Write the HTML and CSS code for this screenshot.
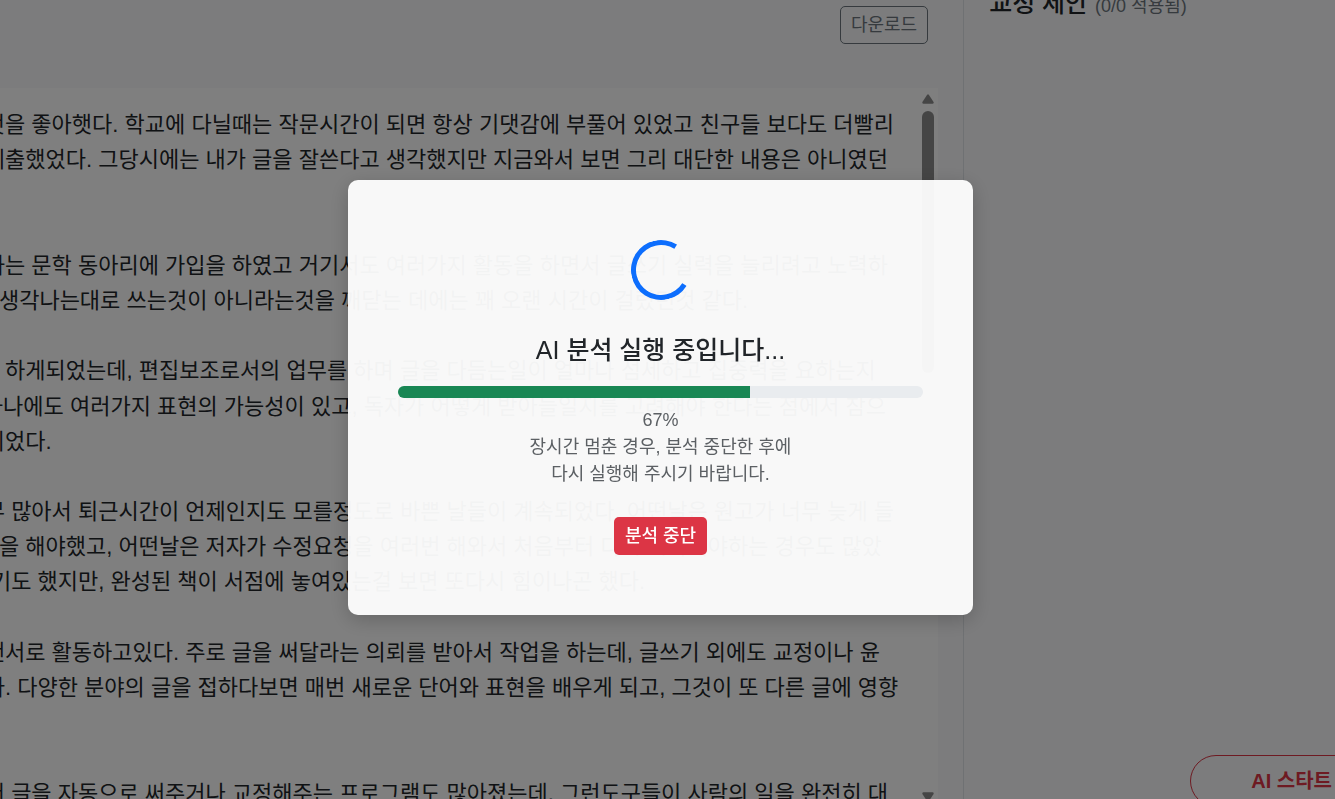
FILE: index.html
```
<!DOCTYPE html>
<html lang="ko">

<head>
    <meta charset="UTF-8">
    <title>AI 교정</title>
    <link rel="stylesheet" href="styles.css">
</head>

<body>
    <div class="app">
        <main class="editor-panel">
            <div class="toolbar">
                <button class="btn btn-outline" type="button">다운로드</button>
            </div>

            <div class="editor">
                <textarea class="editor-text" aria-label="원고" wrap="off" spellcheck="false">
나는 늘 글 쓰던것을 좋아햇다. 학교에 다닐때는 작문시간이 되면 항상 기댓감에 부풀어 있었고 친구들 보다도 더빨리
글을 다 써서 꼭제출했었다. 그당시에는 내가 글을 잘쓴다고 생각했지만 지금와서 보면 그리 대단한 내용은 아니였던


시를 쓰고 또 말하는 문학 동아리에 가입을 하였고 거기서도 여러가지 활동을 하면서 글쓰기 실력을 늘리려고 노력하
글은 그저 막연히생각나는대로 쓰는것이 아니라는것을 깨닫는 데에는 꽤 오랜 시간이 걸렸던것 같다.

편집 보조로 일을 하게되었는데, 편집보조로서의 업무를 하며 글을 다듬는일이 얼마나 섬세하고 집중력을 요하는지
한글, 두 줄, 그 하나에도 여러가지 표현의 가능성이 있고, 독자가 어떻게 받아들일지를 고려해야 한다는 점에서 참으
늘 깊이 알게 또되었다.

매일 할 일이 너무 많아서 퇴근시간이 언제인지도 모를정도로 바쁜 날들이 계속되었다. 어떤날은 원고가 너무 늦게 들
야근과 마감 작업을 해야했고, 어떤날은 저자가 수정요청을 여러번 해와서 처음부터 다시 시작해야하는 경우도 많았
꽤나, 또 참 힘들기도 했지만, 완성된 책이 서점에 놓여있는걸 보면 또다시 힘이나곤 했다.

난 글 쓰는 프리랜서로 활동하고있다. 주로 글을 써달라는 의뢰를 받아서 작업을 하는데, 글쓰기 외에도 교정이나 윤
일은 늘 꽤 즐겁다. 다양한 분야의 글을 접하다보면 매번 새로운 단어와 표현을 배우게 되고, 그것이 또 다른 글에 영향


요즘 와 글을 써서 글을 자동으로 써주거나 교정해주는 프로그램도 많아졌는데, 그런도구들이 사람의 일을 완전히 대</textarea>
                <div class="scrollbar">
                    <svg class="arrow" viewBox="0 0 12 10"><path d="M5 1 Q6 -0.4 7 1 L11.6 8 Q12 9.8 10.5 9.8 H1.5 Q0 9.8 0.4 8 Z" /></svg>
                    <div class="thumb"></div>
                    <svg class="arrow arrow-down" viewBox="0 0 12 10"><path d="M5 9 Q6 10.4 7 9 L11.6 2 Q12 0.2 10.5 0.2 H1.5 Q0 0.2 0.4 2 Z" /></svg>
                </div>
            </div>
        </main>

        <aside class="sidebar">
            <h2 class="sidebar-title">교정 제안 <small>(0/0 적용됨)</small></h2>
            <button class="btn-start" type="button">AI 스타트</button>
        </aside>
    </div>

    <div class="overlay">
        <div class="modal" role="dialog" aria-modal="true" aria-labelledby="modal-title">
            <div class="spinner"></div>
            <h1 class="modal-title" id="modal-title">AI 분석 실행 중입니다...</h1>
            <div class="progress">
                <div class="progress-bar" style="width: 67%"></div>
            </div>
            <p class="modal-text">67%</p>
            <p class="modal-text">장시간 멈춘 경우, 분석 중단한 후에<br>다시 실행해 주시기 바랍니다.</p>
            <button class="btn btn-danger" type="button">분석 중단</button>
        </div>
    </div>
</body>

</html>
```

FILE: styles.css
```
* {
    box-sizing: border-box;
}

body {
    margin: 0;
    height: 100vh;
    overflow: hidden;
    background-color: #f8f9fa;
    color: #212529;
    font-family: "Liberation Sans", "Noto Sans CJK KR", sans-serif;
    font-size: 18px;
    line-height: 1.5;
}

button {
    font-family: inherit;
    cursor: pointer;
}

.app {
    display: grid;
    grid-template-columns: 13fr 5fr;
    height: calc(100vh + 9px);
}

/* editor */
.editor-panel {
    display: flex;
    flex-direction: column;
    min-width: 0;
    padding-right: 25px;
    border-right: 1px solid #dee2e6;
}

.toolbar {
    display: flex;
    justify-content: flex-end;
    padding: 6px 10px 44px;
}

.btn {
    padding: 5px 10px;
    border: 1px solid transparent;
    border-radius: 5px;
    font-size: 18px;
    line-height: 26px;
}

.btn-outline {
    border-color: #6c757d;
    background: none;
    color: #6c757d;
}

.editor {
    display: flex;
    flex: 1;
    min-height: 0;
    overflow: hidden;
    background-color: #fff;
}

.editor-text {
    flex: 1;
    min-width: 0;
    margin-left: -155px;
    padding: 19px 0 0;
    border: none;
    outline: none;
    resize: none;
    overflow: hidden;
    background: none;
    color: #212529;
    font-family: inherit;
    font-size: 22px;
    line-height: 1.6;
    white-space: pre;
}

.scrollbar {
    display: flex;
    flex-direction: column;
    align-items: center;
    gap: 7px;
    padding: 6px 4px;
}

.arrow {
    width: 12px;
    height: 10px;
    fill: #8b8b8b;
}

.arrow-down {
    margin-top: auto;
}

.thumb {
    width: 12px;
    height: 37%;
    border-radius: 6px;
    background-color: #8b8b8b;
}

/* suggestions */
.sidebar {
    display: flex;
    flex-direction: column;
    justify-content: space-between;
    align-items: flex-end;
    padding: 0 0 1px 25px;
    overflow: hidden;
}

.sidebar-title {
    align-self: flex-start;
    margin: -15px 0 0;
    font-size: 25px;
    font-weight: 500;
}

.sidebar-title small {
    color: #6c757d;
    font-size: 18px;
    font-weight: 400;
}

.btn-start {
    margin-right: -58px;
    padding: 10px 60px;
    border: 1px solid #dc3545;
    border-radius: 26px;
    background-color: #f8f9fa;
    color: #dc3545;
    font-size: 20px;
    font-weight: bold;
    line-height: 30px;
}

/* progress dialog */
.overlay {
    position: fixed;
    inset: 0;
    display: flex;
    justify-content: center;
    align-items: center;
    padding: 0 14px 4px 0;
    background-color: rgba(0, 0, 0, 0.5);
}

.modal {
    display: flex;
    flex-direction: column;
    align-items: center;
    width: 90%;
    max-width: 625px;
    padding: 60px 50px;
    border-radius: 10px;
    background-color: rgba(255, 255, 255, 0.95);
    box-shadow: 0 5px 20px rgba(0, 0, 0, 0.2);
    text-align: center;
}

.spinner {
    width: 60px;
    height: 60px;
    border: 5px solid #0d6efd;
    border-right-color: transparent;
    border-radius: 50%;
    transform: rotate(-13deg);
}

.modal-title {
    margin: 35px 0 20px;
    font-size: 25px;
    font-weight: 500;
    line-height: 31px;
}

.progress {
    width: 100%;
    height: 12px;
    margin-bottom: 9px;
    border-radius: 6px;
    overflow: hidden;
    background-color: #e9ecef;
}

.progress-bar {
    height: 100%;
    background-color: #198754;
}

.modal-text {
    margin: 0;
    color: #5c6064;
    font-size: 18px;
    line-height: 27px;
}

.btn-danger {
    margin-top: 29px;
    background-color: #dc3545;
    color: #fff;
    font-weight: 500;
}
```
